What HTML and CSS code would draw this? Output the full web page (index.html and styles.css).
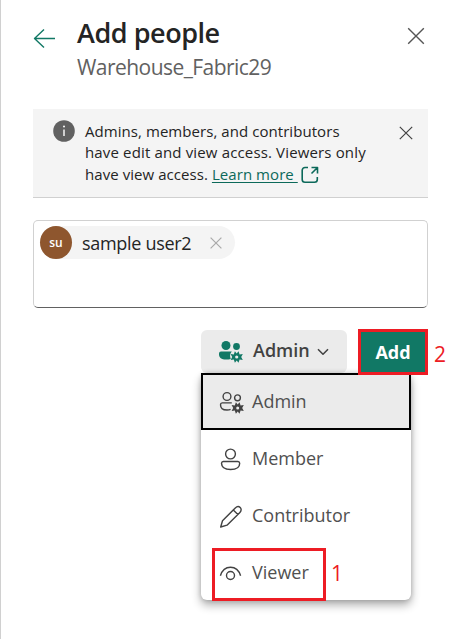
FILE: index.html
```html
<!DOCTYPE html>
<html lang="en">
<head>
<meta charset="utf-8">
<title>Add people</title>
<link rel="stylesheet" href="styles.css">
</head>
<body>
<main class="panel">
  <header class="header">
    <svg class="back" width="24" height="22" viewBox="0 0 24 22"><path d="M22 11.500H1.500M11 2.500L1.500 11.500L11 20.500"/></svg>
    <div class="heading">
      <h1>Add people</h1>
      <p>Warehouse_Fabric29</p>
    </div>
    <svg class="close" width="18" height="18" viewBox="0 0 18 18"><path d="M1.200 1.200L16.800 16.800M16.800 1.200L1.200 16.800"/></svg>
  </header>

  <section class="notice">
    <svg class="info" width="22" height="22" viewBox="0 0 22 22"><circle cx="11" cy="11" r="10.800"/><path d="M11 9.400V16"/><circle class="dot" cx="11" cy="6.600" r="1"/></svg>
    <p class="notice-text">
      <span class="line">Admins, members, and contributors</span>
      <span class="line wide">have edit and view access. Viewers only</span>
      <span class="line">have view access. <a>Learn more </a><svg class="external" width="18" height="18" viewBox="0 0 18 18"><path d="M7 1.500H4A2.800 2.800 0 0 0 1.200 4.300V13.500A2.800 2.800 0 0 0 4 16.300H13.500A2.800 2.800 0 0 0 16.300 13.500V11M10.500 1.500H16.500V7.500M16.300 1.700L10.500 7.500"/></svg></span>
    </p>
    <svg class="dismiss" width="14" height="14" viewBox="0 0 14 14"><path d="M.8 .8L13.200 13.200M13.200 .8L.8 13.200"/></svg>
  </section>

  <section class="people">
    <div class="chip">
      <span class="avatar">su</span>
      <span class="name">sample user2</span>
      <svg class="remove" width="12" height="12" viewBox="0 0 12 12"><path d="M.6 .6L11.400 11.400M11.400 .6L.6 11.400"/></svg>
    </div>
  </section>

  <div class="actions">
    <div class="role-picker">
      <button class="role">
        <svg class="role-icon" width="26" height="24" viewBox="0 0 26 24">
          <circle cx="8" cy="5.500" r="4.500"/><circle cx="18.500" cy="6.500" r="3.400"/>
          <path d="M3 11.500H13.800C11.800 13.500 11.600 16.500 12.800 18.700C11.500 19.500 9.700 19.600 8 19.600C3.500 19.600 1 17.500 1 14.500V13.500A2 2 0 0 1 3 11.500Z"/>
          <path d="M16.900 11.200L18.700 13.400L20.500 11.200L21.600 14.400L24.800 14L23.200 17L24.800 20L21.600 19.600L20.500 22.800L18.700 20.600L16.900 22.800L15.800 19.600L12.600 20L14.200 17L12.600 14L15.800 14.400Z"/>
          <circle class="hole" cx="18.700" cy="17" r="1.600"/>
        </svg>
        <span>Admin</span>
        <svg class="chevron" width="12" height="8" viewBox="0 0 12 8"><path d="M1 1.200L6 6.300L11 1.200"/></svg>
      </button>
      <ul class="menu">
        <li class="item selected">
          <svg width="26" height="24" viewBox="0 0 26 24">
            <circle cx="8" cy="5.500" r="3.900"/><circle cx="18.500" cy="6.800" r="2.900"/>
            <path d="M12.800 11.900H3.200A1.800 1.800 0 0 0 1.500 13.700C1.500 17.400 4 19 8 19C9.500 19 10.700 18.800 11.600 18.400"/>
            <path class="gear" d="M16.900 11.200L18.700 13.400L20.500 11.200L21.600 14.400L24.800 14L23.200 17L24.800 20L21.600 19.600L20.500 22.800L18.700 20.600L16.900 22.800L15.800 19.600L12.600 20L14.200 17L12.600 14L15.800 14.400Z"/>
            <circle class="hole" cx="18.700" cy="17" r="1.500"/>
          </svg>
          <span>Admin</span>
        </li>
        <li class="item">
          <svg width="26" height="24" viewBox="0 0 26 24"><circle cx="11.500" cy="6" r="4.900"/><path d="M4.300 13.500H18.900A2 2 0 0 1 20.700 15.300C20.700 19.600 16.500 21.500 11.600 21.500S2.500 19.600 2.500 15.300A2 2 0 0 1 4.300 13.500Z"/></svg>
          <span>Member</span>
        </li>
        <li class="item">
          <svg width="26" height="24" viewBox="0 0 26 24"><path d="M16.300 2.900C18 1.200 20 1.300 21.200 2.500S22.600 5.700 20.900 7.400L8 20.200L1.700 22L3.500 15.700ZM14.300 4.900L18.900 9.400"/></svg>
          <span>Contributor</span>
        </li>
        <li class="item">
          <svg width="26" height="24" viewBox="0 0 26 24"><path d="M1.400 13.800C3.300 7.700 7.300 5.300 11.500 5.300S19.700 7.700 21.600 13.800"/><circle cx="11.500" cy="13.500" r="4"/></svg>
          <span>Viewer</span>
        </li>
      </ul>
      <div class="callout viewer-callout"></div>
      <span class="step step-one">1</span>
    </div>
    <button class="add">Add</button>
    <span class="step step-two">2</span>
  </div>
</main>
</body>
</html>
```

FILE: styles.css
```css
* { box-sizing: border-box; }

body {
  margin: 0;
  background: #fff;
  font-family: "Open Sans", "Noto Sans", sans-serif;
  color: #242424;
}

h1, p, ul { margin: 0; padding: 0; }

svg {
  display: block;
  flex: none;
  fill: none;
  stroke: #424242;
  stroke-width: 1.2;
  stroke-linejoin: round;
}

button { border: 0; font-family: inherit; }

.panel {
  height: 639px;
  padding: 0 28px 0 32px;
  border-left: 1px solid #d0d0d0;
  overflow: hidden;
}

.header {
  display: flex;
  align-items: flex-start;
  height: 109px;
  padding-top: 16px;
}

.back { margin-top: 11px; stroke: #117865; stroke-width: 1.4; }
.heading { flex: 1; margin-left: 20px; white-space: nowrap; }
.heading h1 { font-size: 27px; line-height: 34px; font-weight: 600; letter-spacing: -.45px; }
.heading p { font-size: 21px; line-height: 34px; color: #616161; letter-spacing: -.55px; }
.close { margin: 11px 3px 0 0; stroke: #555; stroke-width: 1.4; }

.notice {
  display: flex;
  align-items: flex-start;
  height: 89px;
  padding: 10px 15px 0 19px;
  background: #f4f4f4;
  border-bottom: 1px solid #d0d0d0;
}

.info { margin: 1px -1px 0 1px; fill: #616161; stroke: none; }
.info path { stroke: #fff; stroke-width: 1.4; }
.info .dot { fill: #fff; }
.notice-text { flex: 1; margin: 1px 0 0 11px; font-size: 15px; letter-spacing: .06px; white-space: nowrap; }
.line { display: flex; align-items: center; height: 21.5px; white-space: pre; }
.wide { letter-spacing: .15px; }
.line a { color: #0c695a; text-decoration: underline; text-underline-offset: 2px; }
.external { margin: 3px 0 0 3px; stroke: #0c695a; stroke-width: 1.6; }
.dismiss { margin-top: 7px; }

.people {
  height: 88px;
  margin-top: 22px;
  padding: 5px 6px;
  border: 1px solid #d1d1d1;
  border-bottom-color: #616161;
  border-radius: 5px;
}

.chip {
  display: flex;
  align-items: center;
  width: 195px;
  height: 33px;
  padding-right: 13px;
  border-radius: 17px;
  background: #f4f4f4;
}

.avatar {
  width: 32px;
  height: 33px;
  border-radius: 50%;
  background: #8e562e;
  color: #fff;
  font-size: 12px;
  font-weight: 600;
  line-height: 34px;
  text-align: center;
}

.name { flex: 1; margin-left: 10px; font-size: 18px; letter-spacing: -.3px; }
.remove { stroke: #aaa; }

.actions { display: flex; margin-top: 22px; padding-left: 168px; }
.role-picker { position: relative; width: 146px; margin-right: 11px; }

.role {
  display: flex;
  align-items: center;
  width: 146px;
  height: 43px;
  padding: 0 17px;
  border-radius: 6px;
  background: #ebebeb;
  color: #424242;
  font-size: 18px;
  font-weight: 600;
}

.role span { width: 56px; margin: 0 0 3px 9px; text-align: left; }
.role-icon { fill: #117865; stroke: none; }
.hole { fill: #ebebeb; stroke: none; }
.chevron { margin-left: 8px; stroke-width: 1.5; }

.menu {
  position: absolute;
  top: 43px;
  left: 0;
  width: 210px;
  height: 227px;
  border-radius: 6px;
  background: #fff;
  box-shadow: 0 5px 10px rgba(0, 0, 0, .32), 0 0 5px rgba(0, 0, 0, .18);
  list-style: none;
}

.item {
  display: flex;
  align-items: center;
  height: 57px;
  padding-left: 18px;
  color: #505050;
  font-size: 18px;
}

.item span { margin: 0 0 2px 7px; }
.selected { padding-left: 16px; border: 2px solid #000; background: #ebebeb; }
.item svg { margin-top: 3px; stroke-width: 1.4; }
.item .gear { fill: #424242; stroke: none; }
.item .hole { stroke: none; }

.add {
  position: relative;
  width: 70px;
  height: 46px;
  margin-top: -1px;
  padding: 0;
  border: 3px solid #ed1c24;
  background: #117865;
  color: #fff;
  font-size: 18px;
  font-weight: 700;
}

.callout { position: absolute; border: 3px solid #ed1c24; }
.viewer-callout { top: 218px; left: 11px; width: 114px; height: 53px; }
.step { color: #ed1c24; font-family: "Open Sans", sans-serif; font-size: 21px; font-weight: 500; line-height: 26px; }
.step-one { position: absolute; top: 230px; left: 130px; }
.step-two { width: 12px; margin: 11px -18px 0 6px; }
```
